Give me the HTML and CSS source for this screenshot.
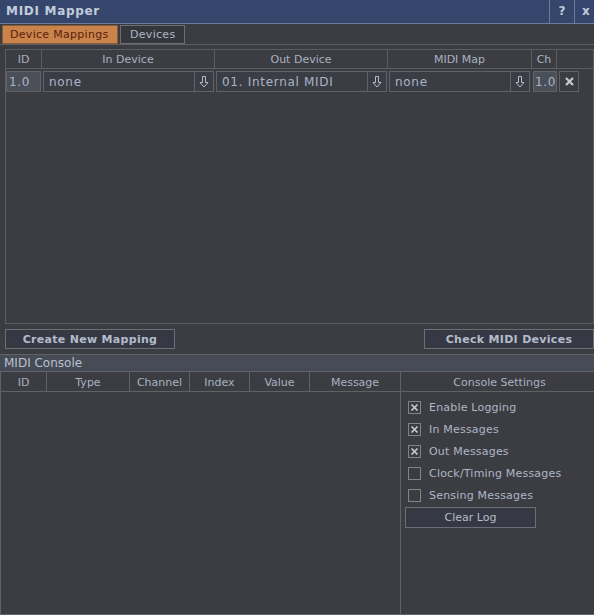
FILE: index.html
```html
<!DOCTYPE html>
<html>
<head>
<meta charset="utf-8">
<link rel="stylesheet" href="styles.css">
</head>
<body>
<div class="app">
  <div class="titlebar">
    <span class="title">MIDI Mapper</span>
    <span class="tb-btn tb-help">?</span>
    <span class="tb-btn tb-close">x</span>
  </div>
  <div class="tabs">
    <span class="tab active">Device Mappings</span>
    <span class="tab">Devices</span>
  </div>
  <div class="map-area">
    <div class="map-table">
      <div class="map-head">
        <div class="hc c-id">ID</div>
        <div class="hc c-in">In Device</div>
        <div class="hc c-out">Out Device</div>
        <div class="hc c-map">MIDI Map</div>
        <div class="hc c-ch">Ch</div>
        <div class="hc c-rest"></div>
      </div>
      <div class="map-row">
        <div class="num id-box">1.0</div>
        <div class="dd dd-wide">
          <span class="dd-text">none</span>
          <span class="dd-arrow"><svg width="10" height="12" viewBox="0 0 10 12"><polygon points="3.5,0.5 6.5,0.5 6.5,6.5 9,6.5 5,11 1,6.5 3.5,6.5" fill="none" stroke="#b4bccc" stroke-width="1"/></svg></span>
        </div>
        <div class="dd dd-wide">
          <span class="dd-text">01. Internal MIDI</span>
          <span class="dd-arrow"><svg width="10" height="12" viewBox="0 0 10 12"><polygon points="3.5,0.5 6.5,0.5 6.5,6.5 9,6.5 5,11 1,6.5 3.5,6.5" fill="none" stroke="#b4bccc" stroke-width="1"/></svg></span>
        </div>
        <div class="dd dd-map">
          <span class="dd-text">none</span>
          <span class="dd-arrow"><svg width="10" height="12" viewBox="0 0 10 12"><polygon points="3.5,0.5 6.5,0.5 6.5,6.5 9,6.5 5,11 1,6.5 3.5,6.5" fill="none" stroke="#b4bccc" stroke-width="1"/></svg></span>
        </div>
        <div class="num ch-box">1.0</div>
        <div class="del-btn"><svg width="9" height="9" viewBox="0 0 9 9"><path d="M1,1 L8,8 M8,1 L1,8" stroke="#c4cad6" stroke-width="2.2" fill="none"/></svg></div>
      </div>
    </div>
    <div class="map-buttons">
      <span class="btn">Create New Mapping</span>
      <span class="btn">Check MIDI Devices</span>
    </div>
  </div>
  <div class="console">
    <div class="console-title">MIDI Console</div>
    <div class="console-body">
      <div class="log">
        <div class="log-head">
          <div class="lh l-id">ID</div>
          <div class="lh l-type">Type</div>
          <div class="lh l-ch">Channel</div>
          <div class="lh l-idx">Index</div>
          <div class="lh l-val">Value</div>
          <div class="lh l-msg">Message</div>
        </div>
      </div>
      <div class="settings">
        <div class="settings-head">Console Settings</div>
        <div class="settings-body">
          <label class="cb-row"><span class="cb checked"><svg width="13" height="13" viewBox="0 0 13 13"><path d="M3.5,3.5 L9.5,9.5 M9.5,3.5 L3.5,9.5" stroke="#c4cad6" stroke-width="1.7" fill="none"/></svg></span>Enable Logging</label>
          <label class="cb-row"><span class="cb checked"><svg width="13" height="13" viewBox="0 0 13 13"><path d="M3.5,3.5 L9.5,9.5 M9.5,3.5 L3.5,9.5" stroke="#c4cad6" stroke-width="1.7" fill="none"/></svg></span>In Messages</label>
          <label class="cb-row"><span class="cb checked"><svg width="13" height="13" viewBox="0 0 13 13"><path d="M3.5,3.5 L9.5,9.5 M9.5,3.5 L3.5,9.5" stroke="#c4cad6" stroke-width="1.7" fill="none"/></svg></span>Out Messages</label>
          <label class="cb-row"><span class="cb"></span>Clock/Timing Messages</label>
          <label class="cb-row"><span class="cb"></span>Sensing Messages</label>
          <span class="clear-btn">Clear Log</span>
        </div>
      </div>
    </div>
  </div>
</div>
</body>
</html>
```

FILE: styles.css
```css
* { box-sizing: border-box; }
body {
  margin: 0;
  background: #3c3d42;
  font-family: "DejaVu Sans", "Liberation Sans", sans-serif;
  font-size: 11px;
  color: #aeb6c6;
}
.app {
  width: 594px;
  height: 615px;
  display: flex;
  flex-direction: column;
  overflow: hidden;
}
.titlebar {
  height: 24px;
  flex: none;
  background: #34466b;
  border-bottom: 1px solid #6f7c99;
  display: flex;
  align-items: stretch;
}
.title {
  flex: 1;
  padding-left: 6px;
  font-weight: bold;
  font-size: 12px;
  letter-spacing: 0.7px;
  color: #c4ccdc;
  line-height: 23px;
}
.tb-btn {
  border-left: 1px solid #6f7c99;
  font-weight: bold;
  font-size: 12px;
  color: #c4ccdc;
  line-height: 23px;
  text-align: center;
}
.tb-help { width: 25px; }
.tb-close { width: 20px; padding-left: 7px; text-align: left; }

.tabs {
  height: 21px;
  flex: none;
  border-bottom: 1px solid #5d5f64;
  display: flex;
  gap: 2px;
  padding: 1px 0 0 2px;
}
.tab {
  height: 19px;
  border: 1px solid #6c6e73;
  background: #35373d;
  line-height: 18px;
  padding: 0 9px;
  color: #aeb6c6;
  letter-spacing: 0.3px;
}
.tab.active {
  background: #c9834b;
  border-color: #8d5b33;
  color: #5b1e0b;
  padding: 0 7px;
  width: 116px;
}

.map-area {
  flex: none;
  padding: 4px 0 0 5px;
}
.map-table {
  width: 589px;
  height: 275px;
  border: 1px solid #5b5d62;
}
.map-head {
  height: 19px;
  display: flex;
  border-bottom: 1px solid #5b5d62;
}
.hc {
  border-right: 1px solid #5b5d62;
  text-align: center;
  line-height: 20px;
  color: #a9b1c1;
}
.c-id { width: 36px; }
.c-in { width: 173px; }
.c-out { width: 173px; }
.c-map { width: 144px; }
.c-ch { width: 25px; }
.c-rest { flex: 1; border-right: none; }

.map-row {
  margin-top: 2px;
  height: 21px;
  display: flex;
  gap: 2px;
}
.num {
  background: #4b4f58;
  border: 1px solid #5f6268;
  line-height: 20px;
  color: #aab4c8;
  font-size: 12px;
  letter-spacing: 0.6px;
  padding-left: 2px;
}
.id-box { width: 35px; }
.ch-box { width: 24px; margin-left: 1px; padding-left: 1px; overflow: hidden; white-space: nowrap; }
.dd {
  display: flex;
  border: 1px solid #5f6268;
  background: #3b3d44;
}
.dd-wide { width: 171px; }
.dd-map { width: 141px; }
.dd-text {
  flex: 1;
  padding-left: 5px;
  line-height: 20px;
  font-size: 12px;
  letter-spacing: 0.7px;
  color: #aab4c8;
  white-space: nowrap;
  overflow: hidden;
}
.dd-arrow {
  width: 19px;
  border-left: 1px solid #5f6268;
  display: flex;
  align-items: center;
  justify-content: center;
}
.del-btn {
  width: 20px;
  border: 1px solid #5f6268;
  display: flex;
  align-items: center;
  justify-content: center;
}

.map-buttons {
  margin-top: 5px;
  height: 20px;
  display: flex;
  justify-content: space-between;
}
.btn {
  width: 170px;
  height: 20px;
  border: 1px solid #6b6e74;
  background: #363943;
  font-weight: bold;
  color: #b4bccc;
  text-align: center;
  line-height: 19px;
  letter-spacing: 0.3px;
}

.console {
  flex: 1;
  margin-top: 5px;
  display: flex;
  flex-direction: column;
  border-top: 1px solid #5f6267;
}
.console-title {
  height: 17px;
  flex: none;
  background: #474b55;
  border-bottom: 1px solid #5f6267;
  padding-left: 4px;
  line-height: 16px;
  font-size: 12px;
  color: #b8c0d0;
}
.console-body {
  flex: 1;
  display: flex;
  border-left: 1px solid #5f6267;
  border-bottom: 1px solid #5f6267;
}
.log {
  width: 400px;
  border-right: 1px solid #5f6267;
}
.log-head, .settings-head {
  height: 20px;
  border-bottom: 1px solid #5f6267;
}
.log-head { display: flex; }
.lh {
  border-right: 1px solid #5f6267;
  text-align: center;
  line-height: 21px;
  color: #a9b1c1;
}
.l-id { width: 46px; }
.l-type { width: 83px; }
.l-ch { width: 60px; }
.l-idx { width: 60px; }
.l-val { width: 60px; }
.l-msg { flex: 1; border-right: none; }

.settings { flex: 1; }
.settings-head {
  text-align: center;
  line-height: 21px;
  color: #a9b1c1;
  padding-left: 4px;
}
.settings-body {
  padding: 9px 0 0 7px;
  display: flex;
  flex-direction: column;
  gap: 9px;
}
.cb-row {
  height: 13px;
  display: flex;
  align-items: center;
  gap: 8px;
  color: #aeb6c6;
  line-height: 13px;
  letter-spacing: 0.2px;
}
.cb {
  width: 13px;
  height: 13px;
  border: 1px solid #80848b;
  display: block;
}
.cb svg { display: block; margin: -1px; }
.clear-btn {
  margin-top: -4px;
  margin-left: -3px;
  width: 131px;
  height: 21px;
  border: 1px solid #6b6e74;
  background: #363943;
  text-align: center;
  line-height: 19px;
  color: #b4bccc;
}
```
